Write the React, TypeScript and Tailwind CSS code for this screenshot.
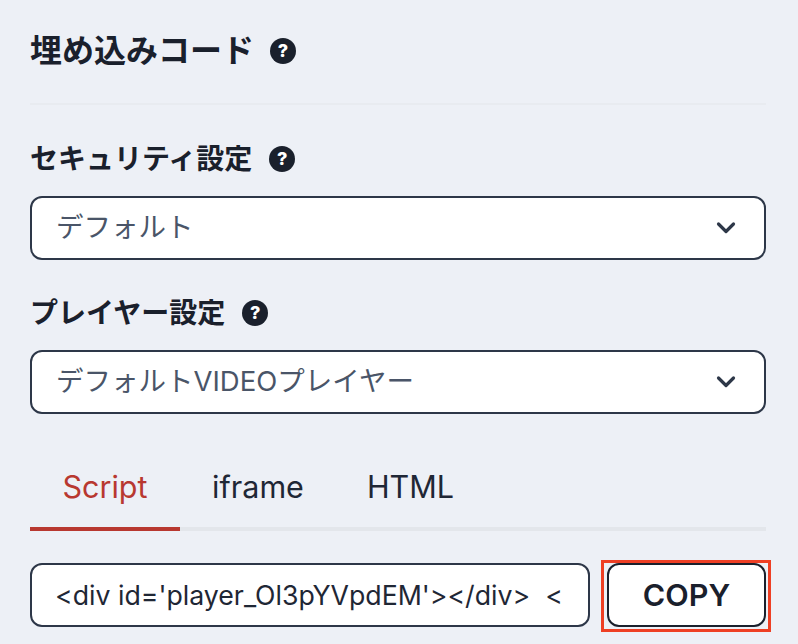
import React from 'react';

const FONT = "font-['Inter','Noto_Sans_CJK_JP',sans-serif]";

const HelpIcon = () => (
  <span className="flex h-[26px] w-[26px] shrink-0 items-center justify-center rounded-full bg-[#1a202c] font-['Inter',sans-serif] text-[18px] leading-none font-extrabold text-white">
    ?
  </span>
);

const Chevron = () => (
  <svg width="20" height="14" viewBox="0 0 20 14" fill="none" stroke="#2d3748" strokeWidth="3.2" strokeLinecap="round" strokeLinejoin="round">
    <path d="M2.5 3 L10 10.5 L17.5 3" />
  </svg>
);

const SelectBox = ({ value }: { value: string }) => (
  <div className="flex h-16 items-center justify-between rounded-xl border-2 border-[#2d3748] bg-white pr-[28px] pl-[24px]">
    <span className="text-[27.5px] leading-none text-[#4a5568]">{value}</span>
    <Chevron />
  </div>
);

const Label = ({ text }: { text: string }) => (
  <div className="flex items-center gap-[17px]">
    <span className="text-[28px] leading-[40px] font-bold text-[#1a202c]">{text}</span>
    <HelpIcon />
  </div>
);

export default function App() {
  return (
    <div className={`${FONT} h-[644px] w-[798px] overflow-hidden bg-[#edf0f6] pt-[30px] pr-8 pl-[30px]`}>
      {/* Header */}
      <div className="flex h-[42px] items-center gap-[16px]">
        <h2 className="text-[32px] leading-[42px] font-bold text-[#1a202c]">埋め込みコード</h2>
        <HelpIcon />
      </div>
      <div className="mt-[31px] h-0.5 bg-[#e8ebf0]" />

      {/* Security */}
      <div className="mt-[34px]">
        <Label text="セキュリティ設定" />
      </div>
      <div className="mt-[17px]">
        <SelectBox value="デフォルト" />
      </div>

      {/* Player */}
      <div className="mt-[33px]">
        <Label text="プレイヤー設定" />
      </div>
      <div className="mt-[17px]">
        <SelectBox value="デフォルトVIDEOプレイヤー" />
      </div>

      {/* Tabs */}
      <div className="mt-[48px] flex border-b-4 border-[#e3e6eb]">
        <div className="-mb-1 w-[150px] border-b-4 border-[#b83830] pb-[15px] text-center text-[30.5px] leading-[50px] text-[#b83830]">Script</div>
        <div className="w-[155px] pb-[15px] pl-[1px] text-center text-[30.5px] leading-[50px] text-[#1f2735]">iframe</div>
        <div className="w-[150px] pb-[15px] pl-[1px] text-center text-[30.5px] leading-[50px] text-[#1f2735]">HTML</div>
      </div>

      {/* Code + copy */}
      <div className="mt-8 flex gap-[17px]">
        <div className="flex h-[64px] w-[560px] items-center overflow-hidden rounded-xl border-2 border-[#2d3748] bg-white pr-[25px] pl-[23px]">
          <span className="text-[26.7px] leading-none whitespace-pre text-[#1f2735]">{"<div id='player_Ol3pYVpdEM'></div>  <"}</span>
        </div>
        <div className="relative flex-1">
          <button className="h-[64px] w-full rounded-xl border-2 border-[#1a202c] bg-white text-[30.5px] font-semibold text-[#1a202c]">COPY</button>
          {/* red highlight from the screenshot */}
          <div className="absolute -top-[3px] -right-[5px] -bottom-[5px] -left-[6px] border-[3px] border-[#ee3f24]" />
        </div>
      </div>
    </div>
  );
}
